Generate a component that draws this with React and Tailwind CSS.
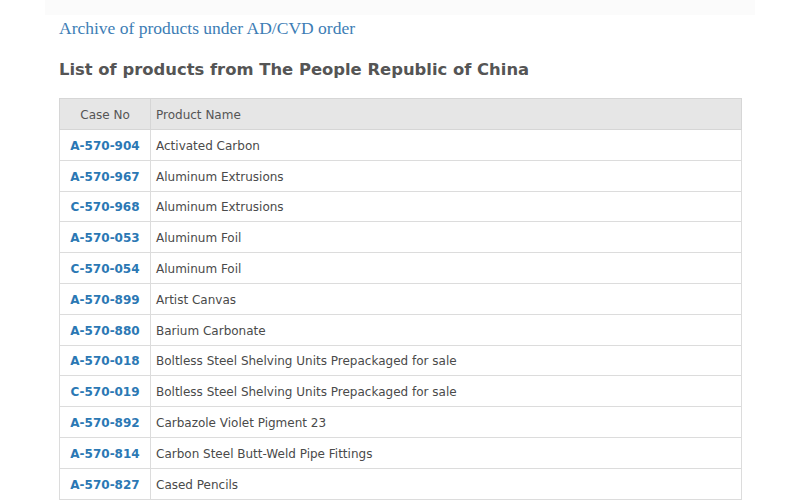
import React from "react";

const rows = [
  ["A-570-904", "Activated Carbon"],
  ["A-570-967", "Aluminum Extrusions"],
  ["C-570-968", "Aluminum Extrusions"],
  ["A-570-053", "Aluminum Foil"],
  ["C-570-054", "Aluminum Foil"],
  ["A-570-899", "Artist Canvas"],
  ["A-570-880", "Barium Carbonate"],
  ["A-570-018", "Boltless Steel Shelving Units Prepackaged for sale"],
  ["C-570-019", "Boltless Steel Shelving Units Prepackaged for sale"],
  ["A-570-892", "Carbazole Violet Pigment 23"],
  ["A-570-814", "Carbon Steel Butt-Weld Pipe Fittings"],
  ["A-570-827", "Cased Pencils"],
];

export default function App() {
  return (
    <div className="w-[800px] h-[500px] overflow-hidden bg-white">
      <div className="mx-[45px] h-[15px] bg-[#fbfbfb]" />
      <div className="px-[59px]">
        <div className="mt-[3px] text-[17.5px] leading-[20px] text-[#3d7db5]" style={{ fontFamily: '"Liberation Serif", serif' }}>
          Archive of products under AD/CVD order
        </div>
        <h1 className="mt-[22px] text-[16.4px] leading-[20px] font-bold text-[#555555]" style={{ fontFamily: '"DejaVu Sans", sans-serif' }}>
          List of products from The People Republic of China
        </h1>
        <table className="mt-[18px] w-[683px] border-collapse text-[12px]" style={{ fontFamily: '"DejaVu Sans", sans-serif' }}>
          <thead>
            <tr className="h-[31px] bg-[#e6e6e6]">
              <th className="w-[91px] border border-[#d6d6d6] pt-[2px] font-normal text-[#555555] text-center">Case No</th>
              <th className="border border-[#d6d6d6] pt-[2px] font-normal text-[#555555] text-left pl-[5px]">Product Name</th>
            </tr>
          </thead>
          <tbody>
            {rows.map(([c, p]) => (
              <tr key={c} className="h-[30.8px]">
                <td className="border border-[#dcdcdc] pt-[2px] text-center font-bold text-[#2b78b4]">{c}</td>
                <td className="border border-[#dcdcdc] pt-[2px] pl-[5px] text-[#4a4a4a]">{p}</td>
              </tr>
            ))}
          </tbody>
        </table>
      </div>
    </div>
  );
}
